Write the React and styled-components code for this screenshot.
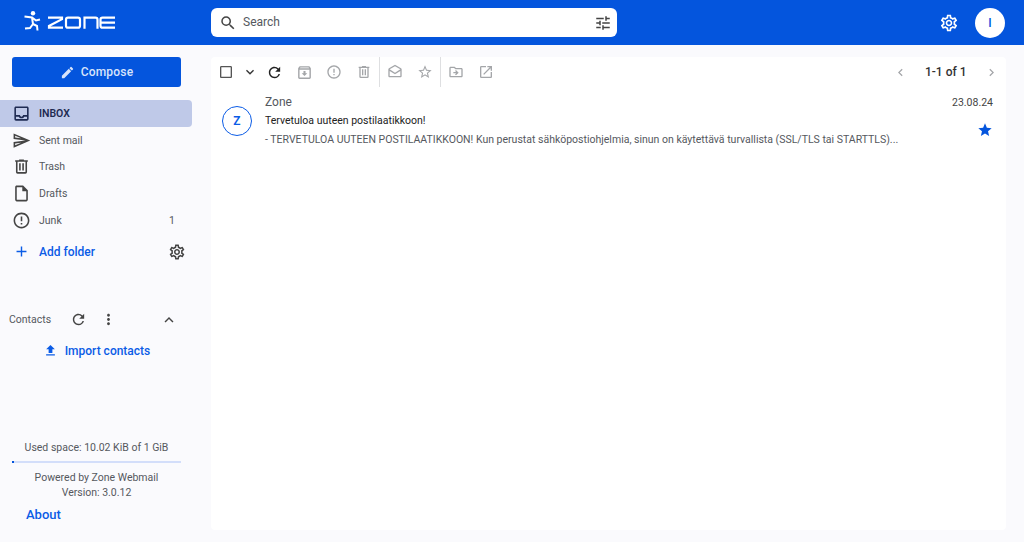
import React from 'react'
import styled, { createGlobalStyle } from 'styled-components'
import {
  MdAdd, MdCheckBoxOutlineBlank, MdChevronLeft, MdChevronRight, MdEdit, MdErrorOutline,
  MdExpandLess, MdExpandMore, MdFileUpload, MdMoreVert, MdOutlineArchive,
  MdOutlineDrafts, MdOutlineDriveFileMove, MdOutlineInbox, MdOutlineInsertDriveFile,
  MdOutlineOpenInNew, MdOutlineSend, MdOutlineSettings, MdRefresh, MdSearch, MdStar,
  MdStarBorder, MdTune,
} from 'react-icons/md'

const GlobalStyle = createGlobalStyle`
  html, body {
    margin: 0;
    padding: 0;
    background: #fafafd;
    font-family: Roboto, "Liberation Sans", sans-serif;
  }
`

const Page = styled.div`
  width: 1024px;
  height: 542px;
  overflow: hidden;
  display: flex;
  flex-direction: column;
`

const Header = styled.header`
  height: 45px;
  flex: none;
  background: #0455dd;
  display: flex;
  align-items: center;
  padding: 0 19px 0 24px;
`

const Logo = styled.div`
  width: 187px;
  display: flex;
  align-items: center;
  svg { display: block; }
`

const SearchBox = styled.div`
  width: 406px;
  height: 29px;
  background: #fff;
  border-radius: 6px;
  display: flex;
  align-items: center;
  padding: 0 5px 0 8px;
  box-sizing: border-box;
  color: #55585e;
  font-size: 12px;
  gap: 6px;
  span { flex: 1; margin-top: -1px; }
  svg { color: #444; }
`

const HeaderRight = styled.div`
  margin-left: auto;
  display: flex;
  align-items: center;
  gap: 16px;
  color: #fff;
`

const Avatar = styled.div`
  width: 30px;
  height: 30px;
  border-radius: 50%;
  background: #fff;
  color: #0455dd;
  font-size: 12px;
  font-weight: 500;
  display: flex;
  align-items: center;
  justify-content: center;
`

const Body = styled.div`
  flex: 1;
  display: flex;
  min-height: 0;
`

const Sidebar = styled.aside`
  width: 211px;
  flex: none;
  display: flex;
  flex-direction: column;
  padding-top: 12px;
  box-sizing: border-box;
`

const Compose = styled.button`
  width: 169px;
  height: 30px;
  margin-left: 12px;
  border: 0;
  border-radius: 3px;
  background: #0455dd;
  color: #d8e4fb;
  font: 500 12px Roboto, sans-serif;
  letter-spacing: 0.2px;
  display: flex;
  align-items: center;
  justify-content: center;
  gap: 6px;
  padding: 0;
`

const FolderList = styled.nav`
  width: 192px;
  margin-top: 13px;
  display: flex;
  flex-direction: column;
`

const Folder = styled.div`
  height: 26.8px;
  display: flex;
  align-items: center;
  padding: 0 17px 0 12px;
  gap: 8px;
  font-size: 10.5px;
  color: ${({ $active }) => ($active ? '#1f2b52' : '#55585e')};
  font-weight: ${({ $active }) => ($active ? 600 : 400)};
  background: ${({ $active }) => ($active ? '#bfc9e8' : 'transparent')};
  border-radius: ${({ $active }) => ($active ? '0 4px 4px 0' : '0')};
  span { flex: 1; }
  b { font-weight: 400; }
  svg { color: ${({ $active }) => ($active ? '#1f2b52' : '#444')}; }
`

const AddFolder = styled.div`
  display: flex;
  align-items: center;
  height: 26px;
  margin-top: 5px;
  padding: 0 25px 0 13px;
  gap: 9px;
  box-sizing: border-box;
  color: #0b5ce6;
  font-size: 12px;
  font-weight: 500;
  span { flex: 1; }
  svg:last-child { color: #444; }
`

const ContactsHead = styled.div`
  display: flex;
  align-items: center;
  margin-top: 42px;
  padding-left: 9px;
  height: 26px;
  font-size: 10.5px;
  color: #55585e;
`

const ContactsTools = styled.div`
  display: flex;
  align-items: center;
  color: #444;
  margin-left: 19px;
  gap: 13px;
`

const ImportLink = styled.div`
  display: flex;
  align-items: center;
  justify-content: center;
  width: 193px;
  gap: 7px;
  margin-top: 6px;
  height: 24px;
  color: #0b5ce6;
  font-size: 12px;
  font-weight: 500;
`

const Footer = styled.div`
  margin-top: auto;
  padding-bottom: 20px;
  font-size: 10.5px;
  color: #55585e;
  text-align: center;
  width: 193px;
`

const UsedSpace = styled.div`
  line-height: 14px;
`

const Meter = styled.div`
  width: 169px;
  height: 2px;
  margin: 6px 0 7px 12px;
  background: #d3defa;
  i {
    display: block;
    height: 2px;
    background: #0455dd;
  }
`

const Line = styled.div`
  line-height: 15px;
`

const About = styled.div`
  text-align: left;
  padding-left: 26px;
  margin-top: 7px;
  font-size: 13px;
  font-weight: 500;
  color: #0b5ce6;
`

const Card = styled.main`
  width: 795px;
  height: 473px;
  margin-top: 12px;
  background: #fff;
  border-radius: 4px;
`

const Toolbar = styled.div`
  height: 30px;
  display: flex;
  align-items: center;
  padding: 0 7.5px 0 3px;
  color: #a4a6a9;
`

const ToolButton = styled.div`
  width: ${({ $w }) => $w || 30}px;
  margin-left: ${({ $gap }) => $gap || 0}px;
  display: flex;
  justify-content: center;
  color: ${({ $dark }) => $dark || 'inherit'};
`

const Divider = styled.div`
  width: 1px;
  height: 30px;
  background: #dedfe1;
`

const Pager = styled.div`
  margin-left: auto;
  display: flex;
  align-items: center;
  gap: 17px;
  color: #a4a6a9;
  span {
    color: #333;
    font-size: 12px;
    font-weight: 500;
  }
`

const Message = styled.div`
  display: flex;
  align-items: center;
  height: 54px;
  margin-top: 7px;
  padding: 0 13px 0 11px;
`

const Initial = styled.div`
  width: 30px;
  height: 30px;
  flex: none;
  box-sizing: border-box;
  border: 1px solid #0b5ce6;
  border-radius: 50%;
  color: #0b5ce6;
  font-size: 12px;
  font-weight: 600;
  display: flex;
  align-items: center;
  justify-content: center;
  margin-right: 13px;
`

const MessageBody = styled.div`
  flex: 1;
  min-width: 0;
  display: flex;
  flex-direction: column;
`

const Sender = styled.div`
  font-size: 12px;
  line-height: 18px;
  color: #55585e;
`

const Subject = styled.div`
  font-size: 10.5px;
  line-height: 19px;
  color: #222;
`

const Snippet = styled.div`
  font-size: 10.5px;
  line-height: 19px;
  color: #55585e;
`

const MessageSide = styled.div`
  align-self: stretch;
  display: flex;
  flex-direction: column;
  align-items: flex-end;
  justify-content: space-between;
  font-size: 10.5px;
  color: #444;
  padding: 2px 0 10px;
  svg { color: #0455dd; }
`

// trash can with two inner bars, the package's one has none
const TrashIcon = ({ size }) => (
  <svg width={size} height={size} viewBox="0 0 24 24" fill="currentColor">
    <path d="M9 3v1H4v2h1v13a2 2 0 0 0 2 2h10a2 2 0 0 0 2-2V6h1V4h-5V3H9zM7 6h10v13H7V6zm2 2v9h2V8H9zm4 0v9h2V8h-2z" />
  </svg>
)

const folders = [
  { name: 'INBOX', Icon: MdOutlineInbox, active: true },
  { name: 'Sent mail', Icon: MdOutlineSend },
  { name: 'Trash', Icon: TrashIcon },
  { name: 'Drafts', Icon: MdOutlineInsertDriveFile },
  { name: 'Junk', Icon: MdErrorOutline, count: 1 },
]

const ZoneLogo = () => (
  <svg width="92" height="24" viewBox="0 0 92 24" fill="none" stroke="#fff" strokeWidth="2.2">
    <circle cx="9" cy="2.2" r="2.2" fill="#fff" stroke="none" />
    <path d="M0.5 5.5L8 6.5l4 3 4-1M8 6.5l1 6.5 4 2 .5 4.5M9 13l-3 4-5 .5" strokeWidth="2" />
    <path d="M24 6.7h14v1.5L25 15v1.6h14M44 6.7h10a2 2 0 0 1 2 2v6a2 2 0 0 1-2 2H44a2 2 0 0 1-2-2v-6a2 2 0 0 1 2-2zM60.5 17.7v-11h11a2 2 0 0 1 2 2v9M91 6.7H78.5a2 2 0 0 0-2 2v6a2 2 0 0 0 2 2H91M76.5 11.7H91" />
  </svg>
)

export default function App() {
  return (
    <Page>
      <GlobalStyle />
      <Header>
        <Logo><ZoneLogo /></Logo>
        <SearchBox>
          <MdSearch size={18} />
          <span>Search</span>
          <MdTune size={18} />
        </SearchBox>
        <HeaderRight>
          <MdOutlineSettings size={20} />
          <Avatar>I</Avatar>
        </HeaderRight>
      </Header>
      <Body>
        <Sidebar>
          <Compose><MdEdit size={15} />Compose</Compose>
          <FolderList>
            {folders.map(({ name, Icon, active, count }) => (
              <Folder key={name} $active={active}>
                <Icon size={19} />
                <span>{name}</span>
                {count && <b>{count}</b>}
              </Folder>
            ))}
          </FolderList>
          <AddFolder>
            <MdAdd size={17} />
            <span>Add folder</span>
            <MdOutlineSettings size={18} />
          </AddFolder>
          <ContactsHead>
            Contacts
            <ContactsTools>
              <MdRefresh size={17} />
              <MdMoreVert size={17} />
              <MdExpandLess size={18} style={{ marginLeft: 30 }} />
            </ContactsTools>
          </ContactsHead>
          <ImportLink><MdFileUpload size={15} />Import contacts</ImportLink>
          <Footer>
            <UsedSpace>Used space: 10.02 KiB of 1 GiB</UsedSpace>
            <Meter><i style={{ width: 2 }} /></Meter>
            <Line>Powered by Zone Webmail</Line>
            <Line>Version: 3.0.12</Line>
            <About>About</About>
          </Footer>
        </Sidebar>
        <Card>
          <Toolbar>
            <ToolButton $w={24} $dark="#555"><MdCheckBoxOutlineBlank size={16} /></ToolButton>
            <ToolButton $w={24} $dark="#333"><MdExpandMore size={16} /></ToolButton>
            <ToolButton $w={24} $dark="#222"><MdRefresh size={17} /></ToolButton>
            <ToolButton $gap={3}><MdOutlineArchive size={17} /></ToolButton>
            <ToolButton><MdErrorOutline size={16} /></ToolButton>
            <ToolButton><TrashIcon size={16} /></ToolButton>
            <Divider />
            <ToolButton><MdOutlineDrafts size={16} /></ToolButton>
            <ToolButton><MdStarBorder size={16} /></ToolButton>
            <Divider />
            <ToolButton><MdOutlineDriveFileMove size={16} /></ToolButton>
            <ToolButton><MdOutlineOpenInNew size={16} /></ToolButton>
            <Pager>
              <MdChevronLeft size={15} />
              <span>1-1 of 1</span>
              <MdChevronRight size={15} />
            </Pager>
          </Toolbar>
          <Message>
            <Initial>Z</Initial>
            <MessageBody>
              <Sender>Zone</Sender>
              <Subject>Tervetuloa uuteen postilaatikkoon!</Subject>
              <Snippet>- TERVETULOA UUTEEN POSTILAATIKKOON! Kun perustat sähköpostiohjelmia, sinun on käytettävä turvallista (SSL/TLS tai STARTTLS)...</Snippet>
            </MessageBody>
            <MessageSide>
              23.08.24
              <MdStar size={16} />
            </MessageSide>
          </Message>
        </Card>
      </Body>
    </Page>
  )
}
